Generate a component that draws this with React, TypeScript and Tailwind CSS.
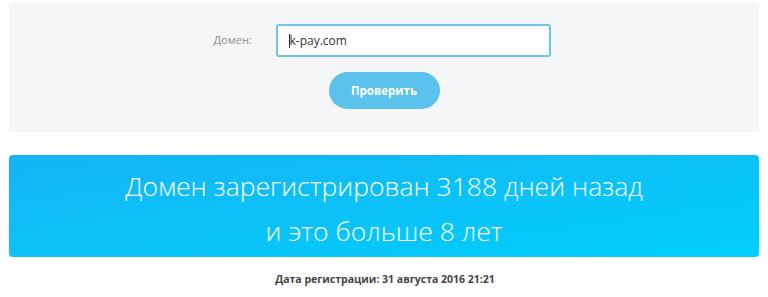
import React from "react";

export default function App() {
  return (
    <div className="w-[768px] h-[297px] bg-white overflow-hidden" style={{ fontFamily: '"Open Sans", "Liberation Sans", sans-serif' }}>
      <div className="pt-[3px] px-[9px]">
        <div className="bg-[#f4f6f7] h-[129px] flex flex-col items-center pt-[21px]">
          <div className="flex items-center ml-[-4px]">
            <span className="text-[11px] text-[#8a8f93] w-[62px]">Домен:</span>
            <div className="w-[275px] h-[33px] bg-white border-2 border-[#6cc6ea] rounded-[3px] flex items-center pl-[11px] text-[12px] text-[#333]">
              <span className="w-px h-[14px] bg-[#333]"></span>
              <span>k-pay.com</span>
            </div>
          </div>
          <button className="mt-[15px] w-[111px] h-[37px] rounded-full bg-[#5ac2ec] text-white text-[11.5px] font-bold">
            Проверить
          </button>
        </div>
      </div>
      <div className="px-[9px] mt-[23px]">
        <div className="h-[102px] rounded-[4px] bg-gradient-to-br from-[#14b4f5] to-[#00cffb] flex flex-col items-center justify-center pt-[6px] text-white text-[26.5px] font-light leading-[45px]">
          <div>Домен зарегистрирован 3188 дней назад</div>
          <div>и это больше 8 лет</div>
        </div>
      </div>
      <div className="text-center mt-[15px] text-[10.5px] font-bold text-[#444] ml-[2px]">
        Дата регистрации: 31 августа 2016 21:21
      </div>
    </div>
  );
}
